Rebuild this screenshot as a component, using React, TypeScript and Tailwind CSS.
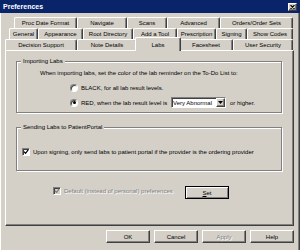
import React from 'react';

interface TabItem {
  label: string;
  w: string;
  selected?: boolean;
}

const row1: TabItem[] = [
  { label: 'Proc Date Format', w: 'w-[63px]' },
  { label: 'Navigate', w: 'w-[50px]' },
  { label: 'Scans', w: 'w-[40px]' },
  { label: 'Advanced', w: 'w-[53px]' },
  { label: 'Orders/Order Sets', w: 'w-[73px]' },
];

const row2: TabItem[] = [
  { label: 'General', w: 'w-[29px]' },
  { label: 'Appearance', w: 'w-[45px]' },
  { label: 'Root Directory', w: 'w-[50px]' },
  { label: 'Add a Tool', w: 'w-[44px]' },
  { label: 'Prescription', w: 'w-[39px]' },
  { label: 'Signing', w: 'w-[31px]' },
  { label: 'Show Codes', w: 'w-[46px]' },
];

const row3: TabItem[] = [
  { label: 'Decision Support', w: 'w-[72px]' },
  { label: 'Note Details', w: 'w-[60px]' },
  { label: 'Labs', w: 'w-[46px]', selected: true },
  { label: 'Facesheet', w: 'w-[54px]' },
  { label: 'User Security', w: 'w-[60px]' },
];

const raised =
  'border border-t-white border-l-white border-r-[#404040] border-b-[#404040] shadow-[inset_-1px_-1px_0_#808080]';

const TabRow: React.FC<{ items: TabItem[]; offset: string }> = ({ items, offset }) => (
  <div className={`flex h-[11px] items-end ${offset}`}>
    {items.map((t) =>
      t.selected ? (
        <div
          key={t.label}
          className={`relative z-10 -mx-[2px] -mt-[2px] -mb-[1px] flex h-[14px] shrink-0 items-start justify-center rounded-t-[2px] border-l border-r border-t border-t-white border-l-white border-r-[#404040] bg-[#d4d0c8] pt-[3px] shadow-[inset_-1px_0_0_#808080] ${t.w}`}
        >
          {t.label}
        </div>
      ) : (
        <div
          key={t.label}
          className={`flex h-[11px] shrink-0 items-center justify-center rounded-t-[2px] border-l border-r border-t border-t-white border-l-white border-r-[#404040] shadow-[inset_-1px_0_0_#808080] ${t.w}`}
        >
          {t.label}
        </div>
      )
    )}
  </div>
);

const Radio: React.FC<{ checked?: boolean }> = ({ checked }) => (
  <div className="flex h-[8px] w-[8px] shrink-0 items-center justify-center rounded-full border border-t-[#808080] border-l-[#808080] border-r-white border-b-white bg-white shadow-[inset_1px_1px_0_#404040]">
    {checked && <div className="h-[3px] w-[3px] rounded-full bg-black" />}
  </div>
);

const Check: React.FC<{ disabled?: boolean }> = ({ disabled }) => (
  <div
    className={`flex h-[8px] w-[8px] shrink-0 items-center justify-center border border-t-[#808080] border-l-[#808080] border-r-white border-b-white shadow-[inset_1px_1px_0_#404040] ${
      disabled ? 'bg-[#d4d0c8]' : 'bg-white'
    }`}
  >
    <svg width="6" height="6" viewBox="0 0 7 7">
      <path
        d="M1 3 L3 5 L6 1"
        fill="none"
        stroke={disabled ? '#808080' : '#000'}
        strokeWidth="1.4"
      />
    </svg>
  </div>
);

const GroupBox: React.FC<{ label: string; className: string; children: React.ReactNode }> = ({
  label,
  className,
  children,
}) => (
  <div
    className={`relative ml-[10px] w-[266px] border border-[#808080] shadow-[inset_1px_1px_0_#fff,1px_1px_0_#fff] ${className}`}
  >
    <span className="absolute -top-[5px] left-[4px] bg-[#d4d0c8] px-[2px] leading-[8px]">{label}</span>
    {children}
  </div>
);

const Button: React.FC<{ label: React.ReactNode; disabled?: boolean; focused?: boolean }> = ({
  label,
  disabled,
  focused,
}) => (
  <div
    className={`flex h-[13px] w-[44px] shrink-0 items-center justify-center ${
      focused
        ? 'border border-black shadow-[inset_1px_1px_0_#fff,inset_-1px_-1px_0_#808080]'
        : raised
    } ${disabled ? 'text-[#808080] [text-shadow:1px_1px_0_#fff]' : ''}`}
  >
    {label}
  </div>
);

export default function App() {
  return (
    <div className="flex h-[250px] w-[300px] flex-col overflow-hidden bg-[#d4d0c8] font-['Liberation_Sans',Arial,sans-serif] text-[6px] leading-[8px] text-black">
      <div className="flex h-[13px] shrink-0 items-center justify-between bg-[#0a246a] pl-[3px] pr-[3px]">
        <span className="text-[7px] font-bold text-white">Preferences</span>
        <div className={`flex h-[8px] w-[9px] items-center justify-center bg-[#d4d0c8] ${raised}`}>
          <svg width="5" height="4" viewBox="0 0 5 4">
            <path d="M0.5 0 L4.5 4 M4.5 0 L0.5 4" stroke="#000" strokeWidth="1.1" />
          </svg>
        </div>
      </div>

      <div className="flex flex-1 flex-col border-r border-r-[#404040] shadow-[inset_-1px_0_0_#808080,inset_1px_0_0_#fff]">
        <div className="mt-[4px] flex flex-col">
          <TabRow items={row1} offset="ml-[14px]" />
          <TabRow items={row2} offset="ml-[9px]" />
          <TabRow items={row3} offset="ml-[5px]" />
        </div>

        <div className="ml-[5px] flex h-[176px] w-[289px] flex-col border border-t-white border-l-white border-r-[#404040] border-b-[#404040] pt-[10px] shadow-[inset_-1px_-1px_0_#808080]">
          <GroupBox label="Importing Labs" className="h-[52px]">
            <div className="flex flex-col pl-[23px] pt-[7px]">
              <div className="h-[8px] whitespace-nowrap">
                When importing labs, set the color of the lab reminder on the To-Do List to:
              </div>
              <div className="mt-[6px] flex h-[10px] items-center gap-[3px] pl-[30px]">
                <Radio />
                <span>BLACK, for all lab result levels.</span>
              </div>
              <div className="mt-[4px] flex h-[11px] items-center pl-[30px]">
                <Radio checked />
                <span className="ml-[3px] w-[90px] whitespace-nowrap">RED, when the lab result level is</span>
                <div className="flex h-[11px] w-[55px] items-center border border-t-[#808080] border-l-[#808080] border-r-white border-b-white bg-white shadow-[inset_1px_1px_0_#404040]">
                  <span className="flex-1 whitespace-nowrap pl-[1px]">Very Abnormal</span>
                  <div className={`flex h-[9px] w-[9px] items-center justify-center bg-[#d4d0c8] ${raised}`}>
                    <svg width="5" height="3" viewBox="0 0 5 3">
                      <path d="M0 0 L5 0 L2.5 3 Z" fill="#000" />
                    </svg>
                  </div>
                </div>
                <span className="ml-[4px]">or higher.</span>
              </div>
            </div>
          </GroupBox>

          <GroupBox label="Sending Labs to PatientPortal" className="mt-[14px] h-[44px]">
            <div className="flex h-full items-center gap-[3px] pl-[5px] pt-[5px]">
              <Check />
              <span className="whitespace-nowrap">
                Upon signing, only send labs to patient portal if the provider is the ordering provider
              </span>
            </div>
          </GroupBox>

          <div className="mt-[15px] flex h-[13px] items-center pl-[47px] pr-[64px]">
            <div className="mb-[3px] flex items-center gap-[3px]">
              <Check disabled />
              <span className="text-[#808080] [text-shadow:1px_1px_0_#fff]">
                Default (instead of personal) preferences
              </span>
            </div>
            <div className="ml-auto">
              <Button
                focused
                label={
                  <span>
                    <span className="underline">S</span>et
                  </span>
                }
              />
            </div>
          </div>
        </div>

        <div className="mt-[4px] flex justify-end gap-[4px] pr-[5px]">
          <Button label="OK" />
          <Button label="Cancel" />
          <Button label="Apply" disabled />
          <Button label="Help" />
        </div>
      </div>
    </div>
  );
}
